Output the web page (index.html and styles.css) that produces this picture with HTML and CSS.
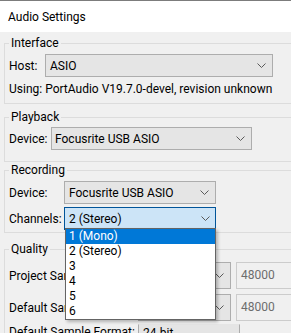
FILE: index.html
```html
<!DOCTYPE html>
<html lang="en">
<head>
    <meta charset="UTF-8">
    <title>Audio Settings</title>
    <link rel="stylesheet" href="styles.css">
</head>
<body>
    <div class="window">
        <div class="titlebar">Audio Settings</div>

        <div class="content">
            <fieldset class="group group-interface">
                <legend>Interface</legend>
                <div class="row">
                    <span class="lbl lbl-host">Host:</span>
                    <div class="combo combo-host">
                        <span class="value">ASIO</span>
                        <svg class="chev" width="9" height="5" viewBox="0 0 9 5"><polyline points="0.5,0.5 4.5,4.5 8.5,0.5"/></svg>
                    </div>
                </div>
                <p class="info">Using: PortAudio V19.7.0-devel, revision unknown</p>
            </fieldset>

            <fieldset class="group group-playback">
                <legend>Playback</legend>
                <div class="row">
                    <span class="lbl lbl-play">Device:</span>
                    <div class="combo combo-play">
                        <span class="value">Focusrite USB ASIO</span>
                        <svg class="chev" width="9" height="5" viewBox="0 0 9 5"><polyline points="0.5,0.5 4.5,4.5 8.5,0.5"/></svg>
                    </div>
                </div>
            </fieldset>

            <fieldset class="group group-recording">
                <legend>Recording</legend>
                <div class="row">
                    <span class="lbl lbl-rec">Device:</span>
                    <div class="combo combo-rec">
                        <span class="value">Focusrite USB ASIO</span>
                        <svg class="chev" width="9" height="5" viewBox="0 0 9 5"><polyline points="0.5,0.5 4.5,4.5 8.5,0.5"/></svg>
                    </div>
                </div>
                <div class="row row-channels">
                    <span class="lbl lbl-rec">Channels:</span>
                    <div class="combo combo-rec focused">
                        <span class="value">2 (Stereo)</span>
                        <svg class="chev" width="9" height="5" viewBox="0 0 9 5"><polyline points="0.5,0.5 4.5,4.5 8.5,0.5"/></svg>
                        <ul class="dropdown">
                            <li class="selected">1 (Mono)</li>
                            <li>2 (Stereo)</li>
                            <li>3</li>
                            <li>4</li>
                            <li>5</li>
                            <li>6</li>
                        </ul>
                    </div>
                </div>
            </fieldset>

            <fieldset class="group group-quality">
                <legend>Quality</legend>
                <div class="row row-quality">
                    <span class="lbl lbl-quality">Project Sample Rate:</span>
                    <div class="combo combo-quality">
                        <span class="value">48000 Hz</span>
                        <svg class="chev" width="9" height="5" viewBox="0 0 9 5"><polyline points="0.5,0.5 4.5,4.5 8.5,0.5"/></svg>
                    </div>
                    <div class="textbox">48000</div>
                </div>
                <div class="row row-quality">
                    <span class="lbl lbl-quality">Default Sample Rate:</span>
                    <div class="combo combo-quality">
                        <span class="value">48000 Hz</span>
                        <svg class="chev" width="9" height="5" viewBox="0 0 9 5"><polyline points="0.5,0.5 4.5,4.5 8.5,0.5"/></svg>
                    </div>
                    <div class="textbox">48000</div>
                </div>
                <div class="row row-format">
                    <span class="lbl lbl-quality">Default Sample Format:</span>
                    <div class="combo combo-format">
                        <span class="value">24-bit</span>
                    </div>
                </div>
            </fieldset>
        </div>
    </div>
</body>
</html>
```
FILE: styles.css
```css
:root {
    --window-bg: #f0f0f0;
    --group-border: #dcdcdc;
    --combo-bg: #e5e5e5;
    --combo-border: #adadad;
    --focus-bg: #cce4f7;
    --focus-border: #005499;
    --select-bg: #0078d7;
    --text-color: #000000;
    --disabled-text: #6d6d6d;
    --font-main: Roboto, "Noto Sans", sans-serif;
}
* { box-sizing: border-box; }
html, body { height: 100%; }
body {
    margin: 0;
    overflow: hidden;
    background: var(--window-bg);
    color: var(--text-color);
    font-family: var(--font-main);
    font-size: 12px;
    line-height: 16px;
}
.window { border-top: 1px solid #7c7c7c; }
.titlebar {
    height: 31px;
    padding: 8px 0 0 8px;
    background: #ffffff;
}
.content { padding-top: 3px; }

/* Group boxes */
.group {
    border: 1px solid var(--group-border);
    margin: 0 -10px 0 4px;
    padding: 0 4px;
    min-width: 0;
}
.group legend {
    padding: 0 2px;
    line-height: 16px;
}
.group-interface { padding-top: 3px; padding-bottom: 6px; }
.group-playback { margin-top: 5px; padding-top: 2px; padding-bottom: 11px; }
.group-recording { margin-top: 0; padding-top: 3px; padding-bottom: 2px; }
.group-quality { margin-top: 8px; padding-top: 5px; }

.row {
    display: flex;
    align-items: center;
}
.row + .row { margin-top: 3px; }
.lbl { flex: none; }
.lbl-host { width: 36px; }
.lbl-play { width: 42px; }
.lbl-rec { width: 55px; }
.lbl-quality { width: 129px; white-space: nowrap; }

.info { margin: 4px 0 0 0; }

/* Combo boxes */
.combo {
    position: relative;
    display: flex;
    align-items: center;
    justify-content: space-between;
    height: 23px;
    padding: 0 6px 0 4px;
    background: var(--combo-bg);
    border: 1px solid var(--combo-border);
    white-space: nowrap;
}
.combo .chev { flex: none; }
.chev polyline { fill: none; stroke: #5a5a5a; stroke-width: 1; }
.combo-host { width: 228px; }
.combo-play { width: 201px; padding-left: 3px; }
.combo-rec { width: 152px; }
.combo.focused {
    background: var(--focus-bg);
    border-color: var(--focus-border);
    padding-right: 5px;
}

/* Open list of the channels combo */
.dropdown {
    position: absolute;
    top: 100%;
    left: 0;
    z-index: 10;
    width: 151px;
    margin: -1px 0 0 0;
    padding: 0;
    list-style: none;
    background: #ffffff;
    border: 1px solid #646464;
    box-shadow: 2px 2px 3px rgba(0,0,0,0.25);
}
.dropdown li {
    height: 15px;
    line-height: 15px;
    padding-left: 3px;
}
.dropdown li.selected { background: var(--select-bg); color: #ffffff; }

/* Quality rows */
.row-quality + .row-quality { margin-top: 5px; }
.combo-quality { width: 102px; height: 27px; }
.textbox {
    flex: none;
    width: 60px;
    height: 27px;
    margin-left: 5px;
    padding: 4px 0 0 4px;
    background: var(--window-bg);
    border: 1px solid #cccccc;
    color: var(--disabled-text);
}
.row-format { align-items: flex-start; margin-top: 3px; }
.combo-format {
    width: 102px;
    height: 27px;
    align-items: flex-start;
    border-top-color: transparent;
}
```
